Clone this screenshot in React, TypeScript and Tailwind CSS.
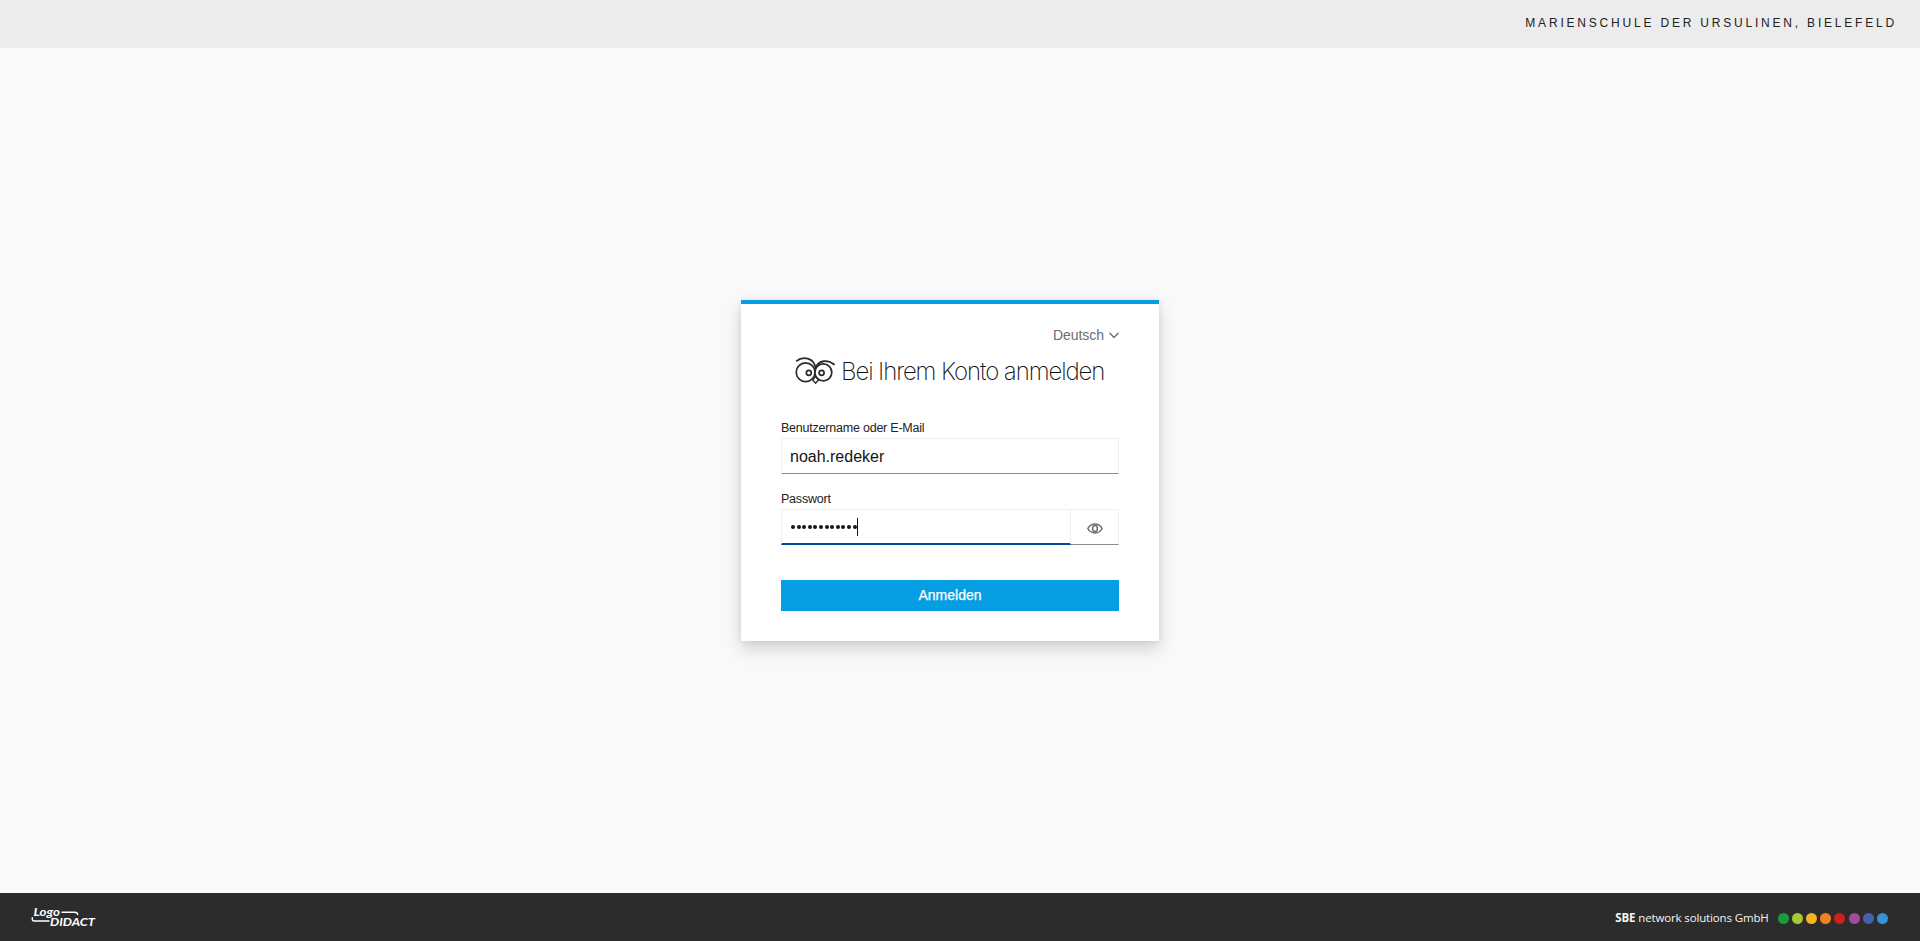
const sans = "font-['Liberation_Sans',Arial,sans-serif]";

const dots = ['#1a9c3c', '#a5c837', '#f6b422', '#f08224', '#cf1f20', '#a04b97', '#4561ab', '#3295d6'];

function Owl() {
  return (
    <svg className="h-[30px] w-[42px] shrink-0" viewBox="0 0 42 30" fill="none" stroke="#2b2b2b" strokeWidth="1.7">
      <circle cx="10.6" cy="16.2" r="9.4" />
      <circle cx="28.3" cy="16.4" r="8.5" />
      <circle cx="13.8" cy="16.8" r="2.5" />
      <circle cx="26.6" cy="16.8" r="2.5" />
      <path d="M1.2 5.2C7.5.2 19 .8 20.6 12.2M20.6 12.2C23.5 3.6 33 3.4 39.6 8.8" strokeWidth="1.8" />
      <path d="M20.6 20.4l-2.9 3.6 2.9 3.3 2.9-3.3z" strokeWidth="1.4" />
    </svg>
  );
}

function Eye() {
  return (
    <svg className="mt-[2px] h-[11px] w-4" viewBox="0 0 16 11" fill="none" stroke="#6a6e73" strokeWidth="1.5">
      <path d="M.8 5.5C4.2-.4 11.8-.4 15.2 5.5 11.8 11.4 4.2 11.4.8 5.5z" />
      <ellipse cx="8" cy="5.5" rx="2.4" ry="3" />
    </svg>
  );
}

function LogoDidact() {
  return (
    <svg className="h-6 w-[66px]" viewBox="0 0 66 24" fill="none">
      <g fill="#fff" fontFamily="Lato, sans-serif" fontStyle="italic">
        <text x="2.5" y="10.6" fontSize="10.5" fontWeight="700" textLength="26.5" lengthAdjust="spacingAndGlyphs">Logo</text>
        <text x="19" y="20.7" fontSize="11.5" fontWeight="700" textLength="45" lengthAdjust="spacingAndGlyphs">DIDACT</text>
      </g>
      <path d="M30.5 7.2h13q3.5 0 3 2.8M1.5 12.2q-1 3.8 2 3.8h15" stroke="#fff" strokeWidth="1.5" />
    </svg>
  );
}

export default function App() {
  return (
    <div className={`flex h-[941px] w-full flex-col bg-[#f9f9f9] ${sans}`}>
      <header className="flex h-12 shrink-0 justify-end bg-[#ececec] pt-[13px] pr-[23px]">
        <span className="text-[12px] leading-5 tracking-[2.8px] whitespace-nowrap text-[#222]">
          MARIENSCHULE DER URSULINEN, BIELEFELD
        </span>
      </header>

      <main className="flex-1 pt-[252px] pl-[741px]">
        <section className="flex h-[341px] w-[418px] flex-col border-t-4 border-[#069ee3] bg-white px-10 shadow-[0_8px_16px_rgba(3,3,3,0.16),0_0_6px_rgba(3,3,3,0.08)]">
          <div className="mt-[21px] flex h-5 items-center justify-end gap-[5px] text-[14px] text-[#6a6e73]">
            <span className="tracking-[-0.05px]">Deutsch</span>
            <svg className="mt-px h-[7px] w-[10px]" viewBox="0 0 10 7" fill="none" stroke="#6a6e73" strokeWidth="1.3">
              <path d="M.5.8 5 5.5 9.5.8" />
            </svg>
          </div>
          <div className="mt-[11px] flex h-[30px] items-center pl-[13.5px]">
            <Owl />
            <h1 className="mt-px ml-[4.5px] font-[Inter,sans-serif] text-[24px] leading-[30px] font-extralight tracking-[-1.08px] whitespace-nowrap text-[#111]">
              Bei Ihrem Konto anmelden
            </h1>
          </div>
          <label className="mt-[34px] block h-[18px] text-[12.5px] leading-[17px] tracking-[-0.22px] text-[#222]">Benutzername oder E-Mail</label>
          <div className="flex h-9 shrink-0 items-center border border-[#efefef] border-b-[#8a8d90] px-2 pt-[2px] text-[16px] text-[#151515]">
            noah.redeker
          </div>
          <label className="mt-[17px] block h-[18px] text-[12.5px] leading-[17px] tracking-[-0.22px] text-[#222]">Passwort</label>
          <div className="flex h-9 shrink-0">
            <div className="flex w-[290px] items-center border border-b-2 border-[#efefef] border-b-[#004b95] pl-[9px]">
              <div className="flex gap-[1.6px]">
                {Array.from({ length: 12 }, (_, i) => (
                  <i key={i} className="size-1 rounded-full bg-[#151515]" />
                ))}
              </div>
              <i className="h-[18px] w-px bg-[#151515]" />
            </div>
            <div className="flex flex-1 items-center justify-center border border-l-0 border-[#efefef] border-b-[#8a8d90]">
              <Eye />
            </div>
          </div>
          <button className="mt-[35px] h-[31px] shrink-0 bg-[#069ee3] pb-px text-[14px] text-white [-webkit-text-stroke:0.25px_white]">Anmelden</button>
        </section>
      </main>

      <footer className="flex h-12 shrink-0 items-center justify-between bg-[#2c2c2c] pr-8 pl-[31px]">
        <LogoDidact />
        <div className="flex items-center">
          <span className="mt-[2px] mr-[9px] font-['Open_Sans',sans-serif] text-[11.5px] leading-5 tracking-[-0.14px] whitespace-nowrap text-[#f5f5f5]">
            <b>SBE</b> network solutions GmbH
          </span>
          <div className="mt-[2px] flex gap-[3.2px]">
            {dots.map((color) => (
              <i key={color} className="size-[11px] rounded-full" style={{ backgroundColor: color }} />
            ))}
          </div>
        </div>
      </footer>
    </div>
  );
}
